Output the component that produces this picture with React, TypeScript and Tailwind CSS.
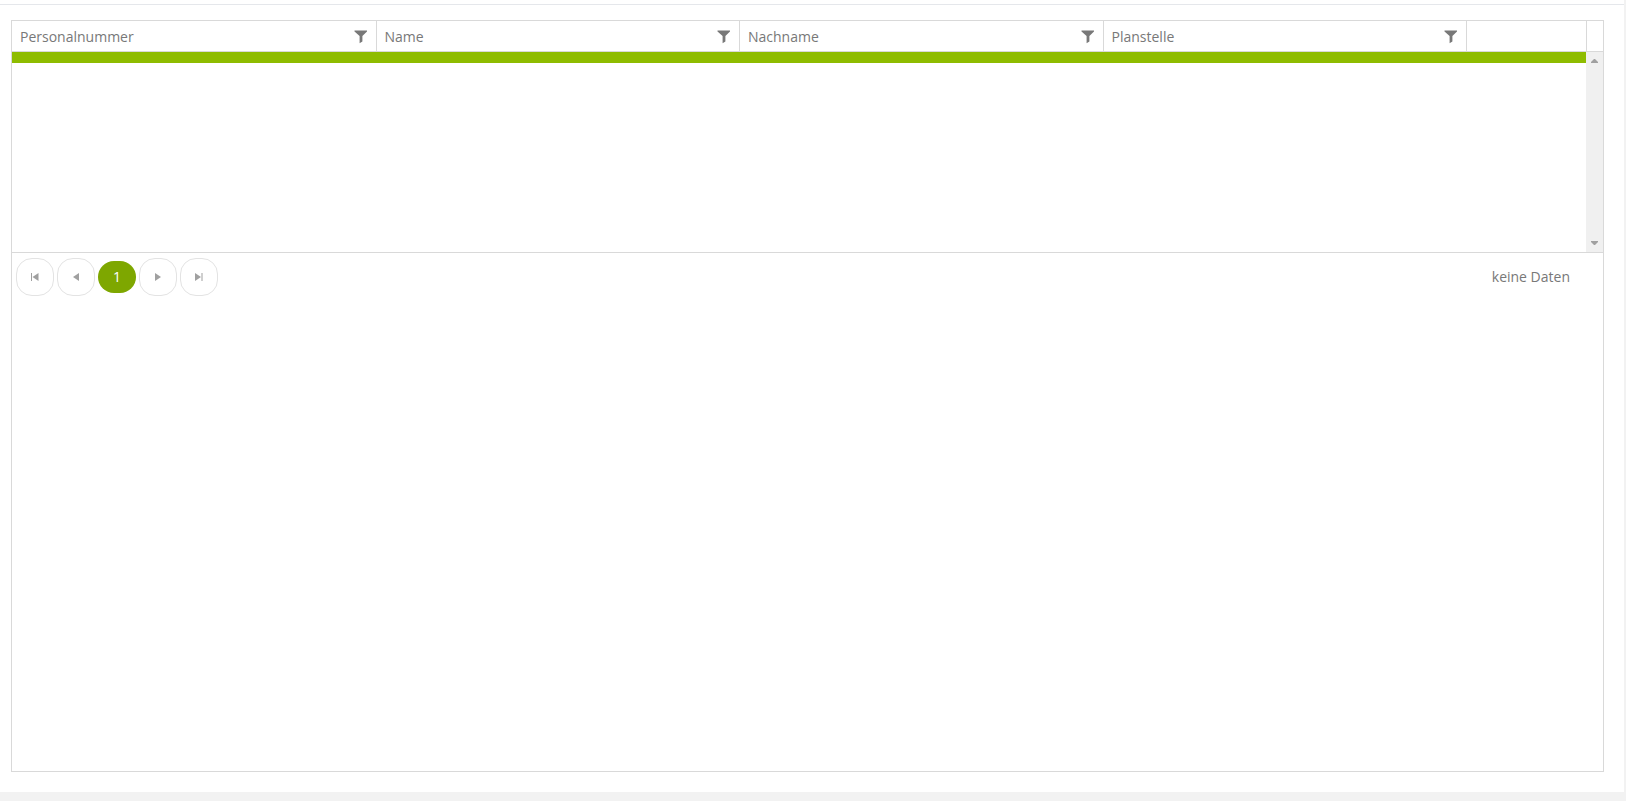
import type { ReactNode } from "react";

const COLUMNS = ["Personalnummer", "Name", "Nachname", "Planstelle"];

function FilterIcon() {
  return (
    <svg width="14" height="14" viewBox="0 0 14 14" fill="#787878" aria-hidden="true">
      <path d="M0.5 0.5h12.5v1L8.4 6v5.6L5.6 13.2V6L0.5 1.5z" />
    </svg>
  );
}

function PagerButton({ label, children }: { label: string; children: ReactNode }) {
  return (
    <button
      type="button"
      aria-label={label}
      className="flex h-[38px] w-[38px] items-center justify-center rounded-2xl border border-[#e3e3e3] bg-white"
    >
      <svg width="8" height="8" viewBox="0 0 8 8" fill="#a0a0a0" aria-hidden="true">
        {children}
      </svg>
    </button>
  );
}

function ScrollArrow({ label, path }: { label: string; path: string }) {
  return (
    <button type="button" aria-label={label} className="flex h-[18px] items-center justify-center">
      <svg width="7" height="4" viewBox="0 0 7 4" fill="#a0a0a0" aria-hidden="true">
        <path d={path} />
      </svg>
    </button>
  );
}

function GridHeader() {
  return (
    <div className="flex border-b border-[#d9d9d9]">
      <div className="min-w-0 flex-1">
        <table className="w-full table-fixed border-separate border-spacing-0">
          <thead>
            <tr>
              {COLUMNS.map((column) => (
                <th
                  key={column}
                  scope="col"
                  className="h-[30px] border-l border-[#d9d9d9] p-0 text-left font-normal first:border-l-0"
                >
                  <div className="flex items-center justify-between px-2 pt-[2px]">
                    <span>{column}</span>
                    <button type="button" aria-label={`${column} filtern`}>
                      <FilterIcon />
                    </button>
                  </div>
                </th>
              ))}
              <td className="w-[120px] border-l border-[#d9d9d9] p-0" />
            </tr>
          </thead>
        </table>
      </div>
      {/* keeps the header aligned with the body next to its scrollbar */}
      <div className="w-[17px] border-l border-[#d9d9d9]" />
    </div>
  );
}

function GridBody() {
  return (
    <div className="flex h-[201px] border-b border-[#d9d9d9]">
      <div className="min-w-0 flex-1">
        <div className="h-[11px] bg-[#8ebc00]" />
      </div>
      <div className="flex w-[17px] flex-col justify-between bg-[#f0f0f0]">
        <ScrollArrow label="Nach oben" path="M3 0h1L7 3v1H0V3z" />
        <ScrollArrow label="Nach unten" path="M0 0h7v1L4 4H3L0 1z" />
      </div>
    </div>
  );
}

function Pager() {
  return (
    <div className="flex items-center justify-between py-[5px] pr-[33px] pl-1">
      <nav aria-label="Seiten" className="flex items-center gap-[3px]">
        <PagerButton label="Erste Seite">
          <path d="M0 0h1v8H0zM7.5 0v8L1.5 4z" />
        </PagerButton>
        <PagerButton label="Vorherige Seite">
          <path d="M7 0v8L1 4z" />
        </PagerButton>
        <button
          type="button"
          aria-current="page"
          className="h-8 w-[38px] rounded-2xl bg-[#7ea700] text-white"
        >
          1
        </button>
        <PagerButton label="Nächste Seite">
          <path d="M1 0v8L7 4z" />
        </PagerButton>
        <PagerButton label="Letzte Seite">
          <path d="M0 0v8L6 4zM6.5 0h1v8h-1z" />
        </PagerButton>
      </nav>
      <span>keine Daten</span>
    </div>
  );
}

export default function App() {
  return (
    <div className="flex h-screen flex-col bg-[#f2f2f2] pr-0.5 pb-[9px] font-['Open_Sans','Noto_Sans',sans-serif] text-sm text-[#787878]">
      <div className="flex min-h-0 flex-1 flex-col bg-white pt-1">
        <div className="border-t border-[#e5e7eb]" />
        <main className="flex min-h-0 flex-1 flex-col pt-[15px] pr-5 pb-5 pl-[11px]">
          <section className="flex-1 border border-[#d9d9d9]">
            <GridHeader />
            <GridBody />
            <Pager />
          </section>
        </main>
      </div>
    </div>
  );
}
